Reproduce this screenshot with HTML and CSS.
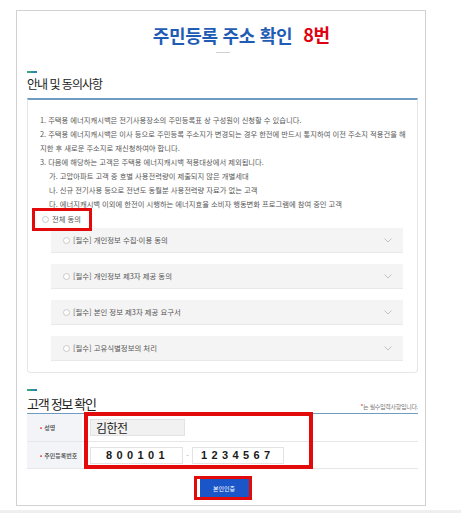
FILE: index.html
```html
<!DOCTYPE html>
<html lang="ko">
<head>
<meta charset="utf-8">
<title>주민등록 주소 확인</title>
<link rel="stylesheet" href="styles.css">
</head>
<body>
<div class="card">
  <h1 class="title"><span class="title-main">주민등록 주소 확인<span class="title-num">8번</span></span></h1>
  <div class="title-rule"></div>

  <div class="sec-bar"></div>
  <h2 class="sec-title">안내 및 동의사항</h2>

  <div class="notice">
    <p>1. 주택용 에너지캐시백은 전기사용장소의 주민등록표 상 구성원이 신청할 수 있습니다.</p>
    <p>2. 주택용 에너지캐시백은 이사 등으로 주민등록 주소지가 변경되는 경우 한전에 반드시 통지하여 이전 주소지 적용건을 해지한 후 새로운 주소지로 재신청하여야 합니다.</p>
    <p>3. 다음에 해당하는 고객은 주택용 에너지캐시백 적용대상에서 제외됩니다.</p>
    <p class="sub">가. 고압아파트 고객 중 호별 사용전력량이 제출되지 않은 개별세대</p>
    <p class="sub">나. 신규 전기사용 등으로 전년도 동월분 사용전력량 자료가 없는 고객</p>
    <p class="sub">다. 에너지캐시백 이외에 한전이 시행하는 에너지효율 소비자 행동변화 프로그램에 참여 중인 고객</p>
    <div class="agree-all"><span class="radio"></span>전체 동의<span class="mark mark-all"></span></div>
    <ul class="terms">
      <li class="term"><span class="radio"></span><span class="term-text">[필수] 개인정보 수집·이용 동의</span><svg class="chev" width="8" height="5" viewBox="0 0 8 5"><path d="M0.5 0.5 L4 4 L7.5 0.5" fill="none" stroke="#b5b5b5" stroke-width="0.8"/></svg></li>
      <li class="term"><span class="radio"></span><span class="term-text">[필수] 개인정보 제3자 제공 동의</span><svg class="chev" width="8" height="5" viewBox="0 0 8 5"><path d="M0.5 0.5 L4 4 L7.5 0.5" fill="none" stroke="#b5b5b5" stroke-width="0.8"/></svg></li>
      <li class="term"><span class="radio"></span><span class="term-text">[필수] 본인 정보 제3자 제공 요구서</span><svg class="chev" width="8" height="5" viewBox="0 0 8 5"><path d="M0.5 0.5 L4 4 L7.5 0.5" fill="none" stroke="#b5b5b5" stroke-width="0.8"/></svg></li>
      <li class="term"><span class="radio"></span><span class="term-text">[필수] 고유식별정보의 처리</span><svg class="chev" width="8" height="5" viewBox="0 0 8 5"><path d="M0.5 0.5 L4 4 L7.5 0.5" fill="none" stroke="#b5b5b5" stroke-width="0.8"/></svg></li>
    </ul>
  </div>

  <div class="sec-bar cust-bar"></div>
  <div class="cust-head">
    <h2 class="cust-title">고객 정보 확인</h2>
    <span class="req"><em>*</em>는 필수입력사항입니다.</span>
  </div>
  <div class="form">
    <div class="row row-first">
      <div class="label"><i>•</i>성명</div>
      <div class="field"><span class="input input-ro">김한전</span></div>
    </div>
    <div class="row">
      <div class="label"><i>•</i>주민등록번호</div>
      <div class="field"><span class="input input-num input-a">800101</span><span class="dash">-</span><span class="input input-num input-b">1234567</span></div>
    </div>
    <div class="mark mark-form"></div>
  </div>
  <div class="actions">
    <span class="btn-wrap"><button class="btn" type="button">본인인증</button></span>
  </div>
</div>
<div class="strip"></div>
</body>
</html>
```
FILE: styles.css
```css
html, body { margin: 0; }
body {
  padding: 10px 0 0 16px;
  background: #fff;
  font-family: "Noto Sans CJK KR", "Noto Sans", sans-serif;
  color: #333;
  overflow: hidden;
}
.card {
  width: 410px;
  box-sizing: border-box;
  border: 1px solid #d2d2d2;
  padding: 0 7px 5px 10px;
}
.title {
  margin: 0;
  padding-top: 12px;
  text-align: center;
  font-size: 18px;
  line-height: 24px;
  font-weight: 700;
  color: #1f5db4;
  letter-spacing: -0.3px;
}
.title-main { position: relative; }
.title-num {
  position: absolute;
  left: 100%;
  top: 0;
  margin-left: 11px;
  color: #e0000f;
  white-space: nowrap;
}
.title-rule {
  width: 14px;
  height: 1px;
  background: #cfcfcf;
  margin: 5px auto 0;
}
.sec-bar {
  width: 10px;
  height: 2px;
  background: linear-gradient(90deg, #3bb36b, #2a78c2);
  margin-top: 18px;
}
.sec-title {
  margin: 3px 0 0;
  font-size: 12px;
  line-height: 16px;
  font-weight: 400;
  color: #222;
  letter-spacing: -1px;
}
.notice {
  margin-top: 6px;
  border: 1px solid #e6e6e6;
  border-top: 2px solid #6f9cc0;
  border-radius: 0 0 4px 4px;
  padding: 13px 6px 11px 12px;
  font-size: 7.3px;
  line-height: 14px;
  color: #585858;
}
.notice p { margin: 0; }
.notice .sub { padding-left: 9px; }
.agree-all {
  position: relative;
  display: flex;
  align-items: center;
  height: 16px;
  padding-left: 2px;
  font-size: 7.3px;
  color: #555;
}
.radio {
  flex: none;
  width: 7px;
  height: 7px;
  box-sizing: border-box;
  border: 1px solid #c9c9c9;
  border-radius: 50%;
  background: #fff;
  margin-right: 3px;
}
.mark {
  position: absolute;
  box-sizing: border-box;
  border: 3px solid #e20a0a;
}
.mark-all {
  left: -8px;
  top: -3px;
  width: 60px;
  height: 23px;
}
.terms {
  list-style: none;
  margin: 1px 8px 0 11px;
  padding: 0;
}
.term {
  height: 25px;
  box-sizing: border-box;
  display: flex;
  align-items: center;
  padding: 0 11px 0 12px;
  margin-bottom: 11px;
  background: #f4f4f4;
  border-bottom: 1px solid #e8e8e8;
  font-size: 7.4px;
  color: #555;
}
.term:last-child { margin-bottom: 0; }
.term-text { flex: 1; }
.chev { flex: none; }
.cust-bar { margin-top: 16px; }
.cust-head {
  display: flex;
  justify-content: space-between;
  align-items: baseline;
  margin-top: 4px;
  border-bottom: 1px solid #6f9cc0;
}
.cust-title {
  margin: 0;
  font-size: 13px;
  line-height: 18px;
  font-weight: 400;
  color: #222;
  letter-spacing: -1.3px;
}
.req {
  font-size: 6px;
  color: #777;
  letter-spacing: -0.3px;
}
.req em { font-style: normal; color: #e2231a; }
.form { position: relative; }
.row {
  display: flex;
  height: 26px;
  border-bottom: 1px solid #e7e7e7;
}
.row-first { height: 27px; }
.label {
  width: 55px;
  flex: none;
  box-sizing: border-box;
  padding-left: 13px;
  display: flex;
  align-items: center;
  background: #f2f4f7;
  font-size: 6px;
  font-weight: 500;
  color: #444;
}
.label i { font-style: normal; color: #e2231a; margin-right: 2px; }
.field {
  display: flex;
  align-items: center;
  padding-left: 8px;
}
.input {
  height: 17px;
  box-sizing: border-box;
  border: 1px solid #e3e3e3;
  background: #fff;
  display: flex;
  align-items: center;
  color: #1a1a1a;
}
.input-ro {
  width: 95px;
  padding-left: 5px;
  background: #f1f1f1;
  font-size: 12px;
  letter-spacing: -0.5px;
}
.input-num {
  font-family: "Liberation Sans", Arial, sans-serif;
  font-size: 11px;
  font-weight: 700;
  letter-spacing: 4.4px;
}
.input-a { width: 93px; padding-left: 15px; }
.input-b { width: 92px; padding-left: 8px; }
.dash {
  width: 9px;
  text-align: center;
  font-size: 7px;
  color: #999;
}
.mark-form {
  left: 57px;
  top: -2px;
  width: 229px;
  height: 57px;
  border-width: 4px;
}
.actions {
  display: flex;
  justify-content: center;
  margin-top: 7px;
}
.btn-wrap {
  display: flex;
  border: 3px solid #e20a0a;
  padding-left: 3px;
  background: #fff;
}
.btn {
  width: 49px;
  height: 18px;
  padding: 0;
  border: 0;
  background: #1a56c8;
  color: #fff;
  font-family: "Noto Sans CJK KR", sans-serif;
  font-size: 6px;
}
.strip {
  height: 5px;
  margin: 4px 0 0 -16px;
  background: #efefef;
}
```
